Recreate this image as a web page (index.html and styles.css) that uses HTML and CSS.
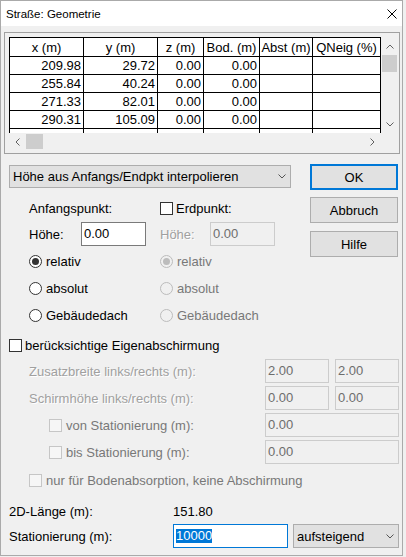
FILE: index.html
```html
<!DOCTYPE html>
<html lang="de">
<head>
  <meta charset="UTF-8">
  <title>Straße: Geometrie</title>
  <link rel="stylesheet" href="styles.css">
</head>
<body>
  <div class="window">

    <!-- Titelleiste -->
    <div class="titlebar">
      <span class="title">Straße: Geometrie</span>
      <svg class="close" width="10" height="10" viewBox="0 0 10 10">
        <path d="M0.5 0.5 L9.5 9.5 M9.5 0.5 L0.5 9.5" stroke="#000" stroke-width="1" fill="none"/>
      </svg>
    </div>

    <div class="client">

      <!-- Punkttabelle mit Scrollbalken -->
      <div class="grid-frame">
        <div class="grid-view">
          <div class="grid-clip">
            <table class="grid">
              <colgroup>
                <col style="width:74px"><col style="width:74px"><col style="width:46px">
                <col style="width:56px"><col style="width:53px"><col style="width:68px">
              </colgroup>
              <tr class="head"><th>x (m)</th><th>y (m)</th><th>z (m)</th><th>Bod. (m)</th><th>Abst (m)</th><th>QNeig (%)</th></tr>
              <tr><td>209.98</td><td>29.72</td><td>0.00</td><td>0.00</td><td></td><td></td></tr>
              <tr><td>255.84</td><td>40.24</td><td>0.00</td><td>0.00</td><td></td><td></td></tr>
              <tr><td>271.33</td><td>82.01</td><td>0.00</td><td>0.00</td><td></td><td></td></tr>
              <tr><td>290.31</td><td>105.09</td><td>0.00</td><td>0.00</td><td></td><td></td></tr>
              <tr><td>309.88</td><td>124.87</td><td>0.00</td><td>0.00</td><td></td><td></td></tr>
            </table>
          </div>
          <div class="vscroll">
            <div class="sb-arrow up">
              <svg width="8" height="5" viewBox="0 0 8 5"><path d="M0.5 4.5 L4 1 L7.5 4.5" stroke="#606060" fill="none"/></svg>
            </div>
            <div class="sb-thumb"></div>
            <div class="sb-track"></div>
            <div class="sb-arrow down">
              <svg width="8" height="5" viewBox="0 0 8 5"><path d="M0.5 0.5 L4 4 L7.5 0.5" stroke="#606060" fill="none"/></svg>
            </div>
          </div>
        </div>
        <div class="hscroll">
          <div class="sb-arrow left">
            <svg width="5" height="8" viewBox="0 0 5 8"><path d="M4.5 0.5 L1 4 L4.5 7.5" stroke="#606060" fill="none"/></svg>
          </div>
          <div class="sb-thumb"></div>
          <div class="sb-track"></div>
          <div class="sb-arrow right">
            <svg width="5" height="8" viewBox="0 0 5 8"><path d="M0.5 0.5 L4 4 L0.5 7.5" stroke="#606060" fill="none"/></svg>
          </div>
        </div>
      </div>

      <!-- Höhenangaben + Dialogknöpfe -->
      <div class="middle">
        <div class="height-panel">
          <div class="combo">
            <span>Höhe aus Anfangs/Endpkt interpolieren</span>
            <svg width="8" height="5" viewBox="0 0 8 5"><path d="M0.5 0.5 L4 4 L7.5 0.5" stroke="#555" fill="none"/></svg>
          </div>

          <div class="points">
            <div class="point-col start">
              <div class="point-head">Anfangspunkt:</div>
              <div class="height-row">
                <span class="height-label">Höhe:</span>
                <div class="edit">0.00</div>
              </div>
              <div class="radio-row"><span class="radio checked"></span>relativ</div>
              <div class="radio-row"><span class="radio"></span>absolut</div>
              <div class="radio-row"><span class="radio"></span>Gebäudedach</div>
            </div>

            <div class="point-col end">
              <div class="point-head"><span class="check"></span>Erdpunkt:</div>
              <div class="height-row">
                <span class="height-label dim">Höhe:</span>
                <div class="edit off">0.00</div>
              </div>
              <div class="radio-row gray"><span class="radio checked off"></span>relativ</div>
              <div class="radio-row gray"><span class="radio off"></span>absolut</div>
              <div class="radio-row gray"><span class="radio off"></span>Gebäudedach</div>
            </div>
          </div>
        </div>

        <div class="buttons">
          <div class="btn default">OK</div>
          <div class="btn">Abbruch</div>
          <div class="btn">Hilfe</div>
        </div>
      </div>

      <!-- Eigenabschirmung -->
      <div class="shield">
        <div class="shield-head"><span class="check"></span>berücksichtige Eigenabschirmung</div>

        <div class="field-row">
          <span class="field-label dim">Zusatzbreite links/rechts (m):</span>
          <div class="edit off half">2.00</div>
          <div class="edit off half">2.00</div>
        </div>
        <div class="field-row">
          <span class="field-label dim">Schirmhöhe links/rechts (m):</span>
          <div class="edit off half">0.00</div>
          <div class="edit off half">0.00</div>
        </div>
        <div class="field-row sub">
          <span class="field-label gray"><span class="check off"></span>von Stationierung (m):</span>
          <div class="edit off wide">0.00</div>
        </div>
        <div class="field-row sub">
          <span class="field-label gray"><span class="check off"></span>bis Stationierung (m):</span>
          <div class="edit off wide">0.00</div>
        </div>

        <div class="absorb-row gray"><span class="check off"></span>nur für Bodenabsorption, keine Abschirmung</div>
      </div>

      <!-- Länge und Stationierung -->
      <div class="summary">
        <div class="summary-row">
          <span class="summary-label">2D-Länge (m):</span>
          <span>151.80</span>
        </div>
        <div class="summary-row station">
          <span class="summary-label">Stationierung (m):</span>
          <div class="edit focus"><span class="selected">10000</span></div>
          <div class="combo small">
            <span>aufsteigend</span>
            <svg width="8" height="5" viewBox="0 0 8 5"><path d="M0.5 0.5 L4 4 L7.5 0.5" stroke="#555" fill="none"/></svg>
          </div>
        </div>
      </div>

    </div>
  </div>
</body>
</html>
```

FILE: styles.css
```css
* {
  box-sizing: border-box;
}
body {
  margin: 0;
  background: #f0f0f0;
  font-family: "Liberation Sans", Arial, sans-serif;
  font-size: 13px;
  color: #000;
}
.window {
  width: 403px;
  height: 556px;
  border: 1px solid #aaaaaa;
  background: #f0f0f0;
}

/* Titelleiste */
.titlebar {
  height: 25px;
  background: #fff;
  display: flex;
  align-items: center;
  justify-content: space-between;
  padding: 0 5px;
}
.title {
  font-size: 11.5px;
  margin-top: 1px;
}

/* Tabelle */
.grid-frame {
  margin: 6px 0 0 3px;
  width: 396px;
  height: 122px;
  border: 1px solid #a0a0a0;
  padding: 4px 1px 3px 4px;
}
.grid-view {
  display: flex;
  height: 96px;
}
.grid-clip {
  width: 372px;
  height: 96px;
  overflow: hidden;
}
.grid {
  border-collapse: separate;
  border-spacing: 0;
  table-layout: fixed;
  width: 372px;
  border-left: 1px solid #000;
  border-top: 1px solid #000;
  background: #fff;
}
.grid tr {
  height: 18px;
}
.grid tr.head {
  height: 19px;
}
.grid th, .grid td {
  border-right: 1px solid #000;
  border-bottom: 1px solid #000;
  padding: 0 2px 0 0;
  font-weight: normal;
  text-align: right;
  line-height: 15px;
  white-space: nowrap;
  overflow: hidden;
}
.grid th {
  text-align: center;
  padding: 0;
}

/* Scrollbalken */
.vscroll {
  width: 17px;
  height: 96px;
  display: flex;
  flex-direction: column;
}
.vscroll .sb-arrow {
  height: 18px;
}
.vscroll .sb-arrow.down {
  height: 17px;
}
.vscroll .sb-thumb {
  height: 17px;
  margin: 0 1px;
  background: #cdcdcd;
}
.sb-track {
  flex: 1;
}
.sb-arrow {
  display: flex;
  align-items: center;
  justify-content: center;
}
.hscroll {
  width: 372px;
  height: 17px;
  display: flex;
}
.hscroll .sb-arrow {
  width: 17px;
}
.hscroll .sb-thumb {
  width: 17px;
  margin: 1px 0;
  background: #cdcdcd;
}

/* mittlerer Bereich */
.middle {
  display: flex;
  margin-top: 10px;
}
.height-panel {
  width: 282px;
  margin-left: 8px;
  padding-top: 1px;
}
.combo {
  height: 23px;
  border: 1px solid #adadad;
  background: #e1e1e1;
  display: flex;
  align-items: center;
  justify-content: space-between;
  padding: 0 4px 0 3px;
}
.points {
  display: flex;
  margin-top: 8px;
}
.point-col {
  width: 144px;
}
.point-col.start {
  margin-left: 20px;
}
.point-head {
  height: 24px;
  display: flex;
  align-items: center;
}
.height-row {
  height: 24px;
  margin-top: 2px;
  display: flex;
  align-items: center;
}
.height-label {
  width: 52px;
}
.end .height-label {
  width: 50px;
}
.edit {
  width: 65px;
  height: 24px;
  border: 1px solid #7a7a7a;
  background: #fff;
  padding: 0 2px;
  line-height: 21px;
}
.edit.off {
  border-color: #cccccc;
  background: #f0f0f0;
  color: #6d6d6d;
}
.radio-row {
  height: 27px;
  display: flex;
  align-items: center;
}
.radio-row:nth-child(3) {
  margin-top: 2px;
}
.radio {
  width: 13px;
  height: 13px;
  border: 1px solid #333;
  border-radius: 50%;
  background: #fff;
  margin-right: 4px;
  display: flex;
  align-items: center;
  justify-content: center;
}
.radio.checked::after {
  content: "";
  width: 7px;
  height: 7px;
  border-radius: 50%;
  background: #333;
}
.radio.off {
  border-color: #bcbcbc;
  background: #f0f0f0;
}
.radio.off::after {
  background: #bcbcbc;
}
.check {
  width: 13px;
  height: 13px;
  border: 1px solid #333;
  background: #fff;
  margin-right: 3px;
  flex-shrink: 0;
}
.check.off {
  border-color: #c6c6c6;
  background: #f6f6f6;
  margin-right: 4px;
}
.dim {
  color: #a0a0a0;
  text-shadow: 1px 1px #fff;
}
.gray {
  color: #787878;
}

.buttons {
  margin-left: 19px;
  width: 88px;
}
.btn {
  height: 26px;
  border: 1px solid #adadad;
  background: #e1e1e1;
  display: flex;
  align-items: center;
  justify-content: center;
  margin-top: 7px;
}
.btn.default {
  border: 2px solid #0078d7;
  margin-top: 0;
}
.btn:last-child {
  margin-top: 8px;
}

/* Eigenabschirmung */
.shield {
  width: 398px;
}
.shield-head {
  height: 28px;
  padding-left: 8px;
  margin-top: 2px;
  display: flex;
  align-items: center;
}
.field-row {
  height: 24px;
  display: flex;
  align-items: center;
  padding-left: 28px;
}
.field-row + .field-row {
  margin-top: 3px;
}
.field-row.sub {
  padding-left: 48px;
}
.field-label {
  flex: 1;
  display: flex;
  align-items: center;
}
.edit.half {
  width: 64px;
}
.edit.half + .edit.half {
  margin-left: 6px;
}
.edit.wide {
  width: 134px;
}
.absorb-row {
  height: 27px;
  margin-top: 3px;
  padding-left: 28px;
  display: flex;
  align-items: center;
}

/* Länge und Stationierung */
.summary-row {
  display: flex;
  align-items: center;
  height: 25px;
  padding-left: 8px;
}
.summary-row:first-child {
  margin-top: 5px;
}
.summary-label {
  width: 164px;
}
.summary-row.station {
  height: 24px;
}
.edit.focus {
  width: 115px;
  border-color: #0078d7;
}
.selected {
  background: #0078d7;
  color: #fff;
  display: inline-block;
  line-height: 14px;
}
.combo.small {
  width: 106px;
  height: 24px;
  margin-left: 5px;
}
```
